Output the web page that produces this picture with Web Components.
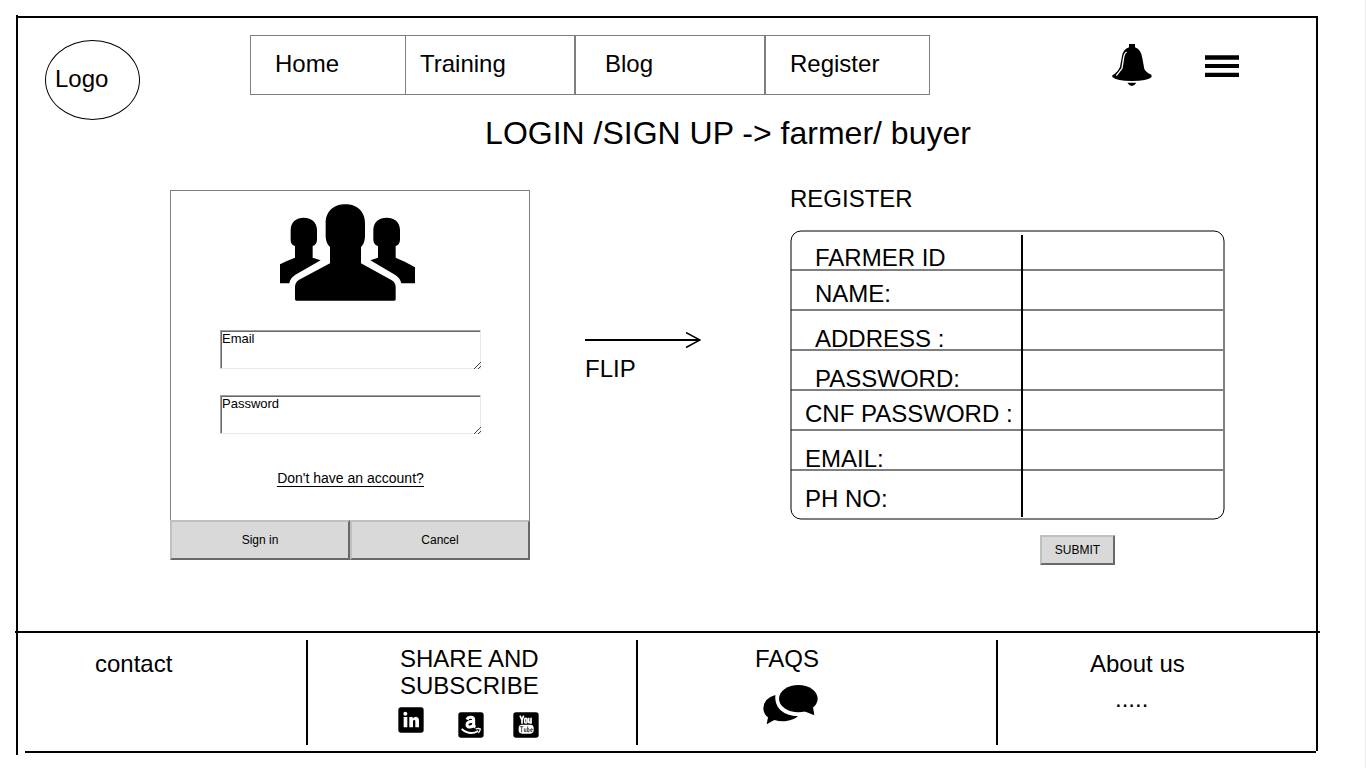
<!DOCTYPE html>
<html lang="en">
<head>
<meta charset="utf-8">
<meta name="viewport" content="width=device-width, initial-scale=1">
<title>Login / Sign up</title>
<style>
  body {
    margin: 0;
    background: #fff;
    color: #000;
    border-right: 1px solid #ececec;
    min-height: 100vh;
    box-sizing: border-box;
    display: flow-root;
    font: 24px/28px "Liberation Sans", Arial, sans-serif;
    --line: #7f7f7f;
  }
</style>
</head>
<body>
<page-frame>
  <site-header slot="header"></site-header>
  <login-card slot="login"></login-card>
  <flip-arrow slot="flip">FLIP</flip-arrow>
  <register-form slot="register"></register-form>
  <site-footer slot="footer"></site-footer>
</page-frame>

<script>
function define(name, html) {
  const template = document.createElement('template');
  template.innerHTML = html;
  customElements.define(name, class extends HTMLElement {
    constructor() {
      super();
      this.attachShadow({ mode: 'open' }).append(template.content.cloneNode(true));
    }
  });
}

define('page-frame', `
  <style>
    :host { display: block; margin: 15px 47px 12px 16px; padding: 1px 0 2px; border-left: 2px solid #000; }
    .sheet { border-top: 2px solid #000; border-right: 2px solid #000; }
    h1 { margin: 0; padding-left: 122px; text-align: center; font-size: 32px; line-height: 26px; font-weight: 400; }
    main {
      display: grid;
      grid-template-columns: 152fr 360px 55fr 115px 90fr 435px 91fr;
      align-items: start;
      padding: 39px 0 66px;
    }
    .login { grid-column: 2; padding-top: 5px; }
    .flip { grid-column: 4; padding-top: 147px; }
    .register { grid-column: 6; }
    .rule { height: 2px; background: #000; margin: 0 -4px 0 -3px; }
    .base { height: 2px; background: #000; margin: 0 2px 0 7px; }
  </style>
  <div class="sheet">
    <slot name="header"></slot>
    <h1>LOGIN /SIGN UP -&gt; farmer/ buyer</h1>
    <main>
      <div class="login"><slot name="login"></slot></div>
      <div class="flip"><slot name="flip"></slot></div>
      <div class="register"><slot name="register"></slot></div>
    </main>
    <div class="rule"></div>
    <slot name="footer"></slot>
  </div>
  <div class="base"></div>`);

define('site-header', `
  <style>
    :host { display: flex; align-items: flex-start; padding: 17px 77px 0 27px; }
    .logo { flex: none; width: 95px; height: 80px; margin: 5px 110px 0 0; box-sizing: border-box;
      border: 1px solid #000; border-radius: 50%; padding: 24px 0 0 9px; color: inherit; text-decoration: none; }
    nav { flex: 0 1 680px; display: grid; grid-template-columns: 154fr 169fr 190fr 165fr; height: 60px;
      box-sizing: border-box; border: 1px solid var(--line); }
    nav a { padding: 14px 0 0 24px; color: inherit; text-decoration: none; }
    nav a + a { border-left: 1px solid var(--line); padding-left: 14px; }
    nav a + a + a { border-left-width: 2px; padding-left: 29px; }
    nav a + a + a + a { padding-left: 24px; }
    .tools { margin-left: auto; display: flex; gap: 53px; align-items: center; padding-top: 8px; }
    button { display: block; border: 0; padding: 0; background: none; }
    .menu { padding-top: 2px; }
    svg { display: block; }
  </style>
  <a class="logo" href="#">Logo</a>
  <nav><a href="#">Home</a><a href="#">Training</a><a href="#">Blog</a><a href="#">Register</a></nav>
  <div class="tools">
    <button type="button" aria-label="Notifications">
      <svg width="40" height="44" viewBox="96 129 120 132">
        <path d="M147 132H165V142Q184 149 187 175L193 207Q197 217 214 224L215 231Q203 243 155 243Q110 243 97 231V226Q115 215 120 200L126 168Q130 147 147 142Z"/>
        <path d="M140 156Q132 160 130 178L126 205L109 227" fill="none" stroke="#fff" stroke-width="4"/>
        <path d="M142 248H169Q163 258 155.500 258Q148 258 142 248Z"/>
      </svg>
    </button>
    <button class="menu" type="button" aria-label="Menu">
      <svg width="34" height="22" viewBox="0 0 102 66"><path d="M0 1H102V14H0ZM0 27H102V39H0ZM0 53H102V66H0Z"/></svg>
    </button>
  </div>`);

define('raised-button', `
  <style>
    :host { display: block; }
    button { display: block; width: 100%; height: 100%; margin: 0; padding: 0; box-sizing: border-box;
      background: #d9d9d9; color: #000; border: 2px solid; border-color: #c0c0c0 #696969 #696969 #c0c0c0;
      font: 12px/16px "Liberation Sans", Arial, sans-serif; }
  </style>
  <button type="button"><slot></slot></button>`);

define('login-card', `
  <style>
    :host { display: block; }
    .body { height: 330px; box-sizing: border-box; border: 1px solid var(--line); border-bottom: 0;
      padding: 13px 48px 0 49px; }
    .users { display: block; margin-left: 60px; }
    .field { position: relative; height: 39px; margin-top: 29px; }
    .field + .field { margin-top: 26px; }
    textarea { display: block; width: 100%; height: 100%; box-sizing: border-box; margin: 0; padding: 0;
      resize: none; overflow: hidden; background: #fff; color: #000; border-radius: 0; outline: 0;
      border: 1px solid; border-color: #a0a0a0 #ece9e4 #ece9e4 #a0a0a0; box-shadow: inset 1px 1px #696969;
      padding-left: 1px; font: 13px/16px "Liberation Sans", Arial, sans-serif; }
    .grip { position: absolute; right: 0; bottom: 0; }
    .join { display: table; margin: 36px auto 0; font-size: 14px; line-height: 16px; color: #000;
      text-decoration: none; border-bottom: 1px solid #000; }
    .actions { display: grid; grid-template-columns: 1fr 1fr; height: 40px; }
  </style>
  <div class="body">
    <svg class="users" width="135" height="97" viewBox="360 72 405 291" aria-hidden="true">
      <path d="M497 130C497 90 525 73 556 73S615 90 615 130V170Q614 190 603 201V250L694 300Q706 307 707 320V358Q707 362 703 362H409Q405 362 405 358V320Q406 307 416 300L510 250V201Q498 190 497 170Z"/>
      <path d="M392 150C392 125 410 113 431 113S471 125 471 150V180Q470 195 458 198V233L482 241L405 285Q391 294 388 310H360V253Q380 242 405 233V198Q392 195 392 180Z"/>
      <path d="M640 150C640 125 658 113 680 113S720 125 720 150V180Q719 195 707 198V233Q740 246 765 262V310H724Q720 294 706 285L631 241L654 233V198Q641 195 640 180Z"/>
    </svg>
    <div class="field">
      <textarea aria-label="Email">Email</textarea>
      <svg class="grip" width="8" height="8" viewBox="0 0 8 8"><path d="M1 8L8 1M5 8L8 5" stroke="#444" fill="none"/></svg>
    </div>
    <div class="field">
      <textarea aria-label="Password">Password</textarea>
      <svg class="grip" width="8" height="8" viewBox="0 0 8 8"><path d="M1 8L8 1M5 8L8 5" stroke="#444" fill="none"/></svg>
    </div>
    <a class="join" href="#">Don't have an account?</a>
  </div>
  <div class="actions"><raised-button>Sign in</raised-button><raised-button>Cancel</raised-button></div>`);

define('flip-arrow', `
  <style>
    :host { display: block; }
    svg { display: block; margin-bottom: 6px; }
  </style>
  <svg width="116" height="17" viewBox="0 0 116 17" aria-hidden="true">
    <path d="M0 8H115" stroke="#000" stroke-width="2"/>
    <path d="M101 0.500L115 8L101 15.500" fill="none" stroke="#000" stroke-width="1.500"/>
  </svg>
  <slot></slot>`);

define('register-form', `
  <style>
    :host { display: block; }
    h2 { margin: 0 0 17px; font-size: 24px; line-height: 28px; font-weight: 400; }
    .grid { position: relative; display: grid; grid-template-rows: 41px repeat(5, 40px) 49px; padding: 0 2px 0 1px; }
    .outline { position: absolute; left: 0; top: 0; width: 100%; height: 100%; pointer-events: none; }
    .split { position: absolute; left: 231px; top: 5px; bottom: 3px; width: 2px; background: #000; }
    .row { display: grid; grid-template-columns: 230px 1fr; box-sizing: border-box; border-bottom: 2px solid var(--line); }
    .row.last { border-bottom: 0; }
    label { padding: 14px 0 0 14px; line-height: 28px; height: 24px; white-space: nowrap; }
    .inset label { padding-left: 24px; }
    .high label { padding-top: 9px; }
    input { min-width: 0; border: 0; margin: 2px 8px; padding: 0; background: none; outline: 0;
      font: 24px/28px "Liberation Sans", Arial, sans-serif; }
    raised-button { width: 75px; height: 30px; margin: 15px 0 0 250px; }
  </style>
  <h2>REGISTER</h2>
  <form>
    <div class="grid">
      <div class="row inset"><label for="fid">FARMER ID</label><input id="fid"></div>
      <div class="row inset high"><label for="name">NAME:</label><input id="name"></div>
      <div class="row inset"><label for="addr">ADDRESS :</label><input id="addr"></div>
      <div class="row inset"><label for="pw">PASSWORD:</label><input id="pw" type="password"></div>
      <div class="row high"><label for="cnf">CNF PASSWORD :</label><input id="cnf" type="password"></div>
      <div class="row"><label for="mail">EMAIL:</label><input id="mail" type="email"></div>
      <div class="row last"><label for="ph">PH NO:</label><input id="ph" type="tel"></div>
      <svg class="outline" aria-hidden="true"><rect x="1" y="1" rx="10" style="width:calc(100% - 2px);height:calc(100% - 2px)" fill="none" stroke="#000"/></svg>
      <span class="split"></span>
    </div>
    <raised-button>SUBMIT</raised-button>
  </form>`);

define('site-footer', `
  <style>
    :host { display: grid; grid-template-columns: 290fr 330fr 360fr 318fr; padding: 7px 0 6px; }
    section { min-height: 105px; box-sizing: border-box; border-right: 2px solid #000; padding: 5px 0 0 92px; line-height: 27px; }
    section:last-child { border-right: 0; }
    .contact { padding: 10px 0 0 77px; }
    .faq { padding-left: 117px; }
    .about { padding-top: 10px; }
    a { color: inherit; text-decoration: none; }
    p { margin: 0; }
    .dots { padding: 8px 0 0 25px; }
    svg { display: block; }
    .social { display: grid; grid-template-columns: 60px 55px 26px; align-items: end; height: 31px; margin: 8px 0 0 -2px; }
    .social a:first-child { align-self: start; }
    .chat { margin: 13px 0 0 8px; }
  </style>
  <section class="contact"><a href="#">contact</a></section>
  <section>
    <p>SHARE AND<br>SUBSCRIBE</p>
    <div class="social">
      <a href="#" aria-label="LinkedIn"><svg width="26" height="26" viewBox="0 0 78 78">
        <rect x="1" y="1" width="76" height="76" rx="8"/>
        <circle cx="22" cy="20" r="6" fill="#fff"/>
        <path d="M17 30H28V61H17ZM34 30H44V35Q48 29 54 29Q63 30 63 42V61H52V44Q52 38 49 38Q45 38 45 44V61H34Z" fill="#fff"/>
      </svg></a>
      <a href="#" aria-label="Amazon"><svg width="26" height="26" viewBox="0 0 78 78">
        <rect x="1" y="1" width="76" height="76" rx="8"/>
        <path d="M27 23Q30 16 38 16Q47 16 47 24V39Q47 43 52 46M47 28C34 28 27 31 27 38C27 48 43 47 47 38" fill="none" stroke="#fff" stroke-width="9"/>
        <path d="M11 51Q36 72 60 57" fill="none" stroke="#fff" stroke-width="6"/>
        <path d="M53 51Q61 48 67 51Q66 58 61 63" fill="none" stroke="#fff" stroke-width="4"/>
      </svg></a>
      <a href="#" aria-label="YouTube"><svg width="26" height="26" viewBox="0 0 78 78">
        <rect x="1" y="1" width="76" height="76" rx="8"/>
        <g fill="none" stroke="#fff" stroke-width="5">
          <path d="M21 11L27 24L32 11M27 23V35"/>
          <rect x="35" y="19" width="7" height="14" rx="3"/>
          <path d="M47 17V30Q47 34 53 30M54 17V35"/>
        </g>
        <rect x="17" y="38" width="45" height="27" rx="10" fill="#fff"/>
        <path d="M21 44H31M26 44V61M34 49V58Q36 61 39 57M39 49V60M44 43V60M44 51Q49 48 49 55T44 59M58 57Q57 60 54 59Q53 57 53 53Q55 48 58 51V54H53" fill="none" stroke="#000" stroke-width="2"/>
      </svg></a>
    </div>
  </section>
  <section class="faq">
    <a href="#">FAQS</a>
    <svg class="chat" width="55" height="40" viewBox="68 165 165 120" aria-hidden="true">
      <ellipse cx="174" cy="206" rx="58" ry="41"/><path d="M188 242L222 256L217 224Z"/>
      <path d="M105 195Q69 205 69 236Q70 252 83 262L79 283L102 270Q120 275 138 273Q160 270 173 259Q140 258 120 240Q102 222 105 195Z"/>
    </svg>
  </section>
  <section class="about"><a href="#">About us</a><p class="dots">.....</p></section>`);
</script>
</body>
</html>
